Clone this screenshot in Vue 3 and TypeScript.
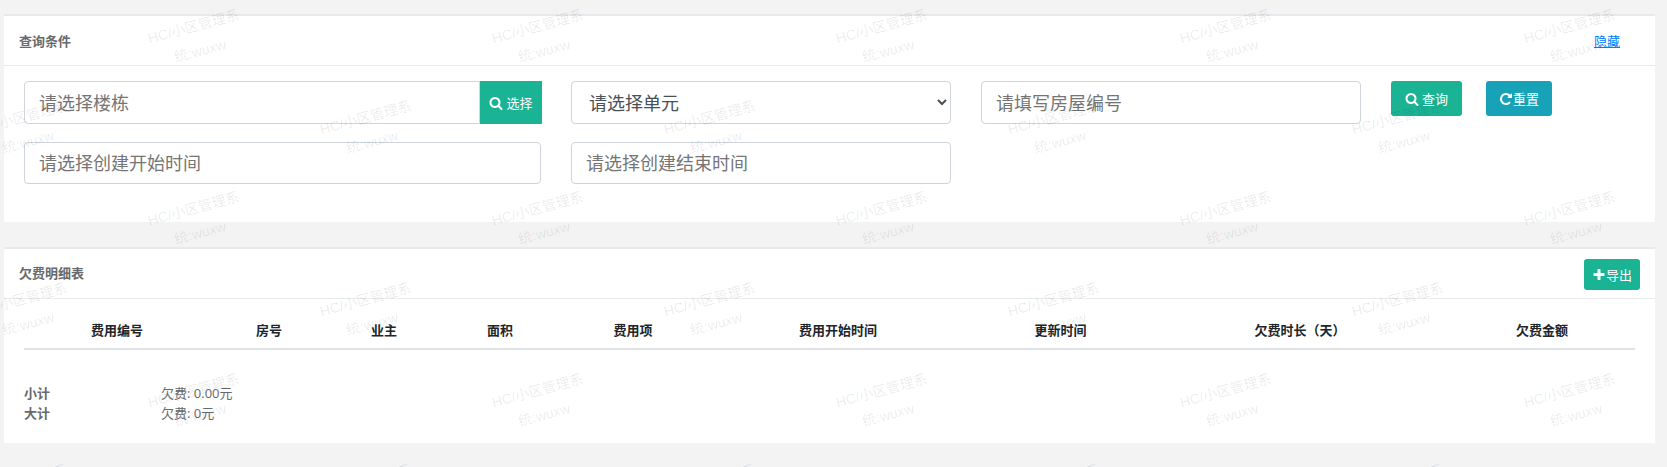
<script setup lang="ts">
const columns = [
  { label: '费用编号', width: 186 },
  { label: '房号', width: 118 },
  { label: '业主', width: 112 },
  { label: '面积', width: 120 },
  { label: '费用项', width: 146 },
  { label: '费用开始时间', width: 264 },
  { label: '更新时间', width: 181 },
  { label: '欠费时长（天）', width: 298 },
  { label: '欠费金额', width: 186 },
]

const marks: { left: number; top: number }[] = []
for (let row = 0; row < 6; row++) {
  const offset = row % 2 === 1 ? 172 : 0
  for (let col = -1; col < 6; col++) {
    marks.push({ left: 197 + offset + col * 344, top: 39 + row * 91 })
  }
}
</script>

<template>
  <div class="page">
    <section class="card search-card">
      <header class="card-head">
        <h5>查询条件</h5>
        <a class="toggle" href="#">隐藏</a>
      </header>
      <div class="search-grid">
        <div class="input-group">
          <input class="field" placeholder="请选择楼栋" />
          <button class="btn select-btn">
            <svg class="icon" viewBox="0 0 1792 1792"><path d="M1216 832q0-185-131.5-316.5t-316.5-131.5-316.5 131.5-131.5 316.5 131.5 316.5 316.5 131.5 316.5-131.5 131.5-316.5zm512 832q0 52-38 90t-90 38q-54 0-90-38l-343-342q-179 124-399 124-143 0-273.5-55.5t-225-150-150-225-55.5-273.5 55.5-273.5 150-225 225-150 273.5-55.5 273.5 55.5 225 150 150 225 55.5 273.5q0 220-124 399l343 343q37 37 37 90z" /></svg>
            <span>选择</span>
          </button>
        </div>
        <select class="field select">
          <option>请选择单元</option>
        </select>
        <input class="field" placeholder="请填写房屋编号" />
        <div class="actions">
          <button class="btn query-btn">
            <svg class="icon" viewBox="0 0 1792 1792"><path d="M1216 832q0-185-131.5-316.5t-316.5-131.5-316.5 131.5-131.5 316.5 131.5 316.5 316.5 131.5 316.5-131.5 131.5-316.5zm512 832q0 52-38 90t-90 38q-54 0-90-38l-343-342q-179 124-399 124-143 0-273.5-55.5t-225-150-150-225-55.5-273.5 55.5-273.5 150-225 225-150 273.5-55.5 273.5 55.5 225 150 150 225 55.5 273.5q0 220-124 399l343 343q37 37 37 90z" /></svg>
            <span>查询</span>
          </button>
          <button class="btn reset-btn">
            <svg class="icon" viewBox="0 0 1792 1792"><path d="M1664 256v448q0 26-19 45t-45 19h-448q-42 0-59-40-17-39 14-69l138-138q-148-137-349-137-104 0-198.5 40.5t-163.5 109.5-109.5 163.5-40.5 198.5 40.5 198.5 109.5 163.5 163.5 109.5 198.5 40.5q119 0 225-52t179-147q7-10 23-12 15 0 25 9l137 138q9 8 9.5 20.5t-7.5 22.5q-109 132-264 204.5t-327 72.5q-156 0-298-61t-245-164-164-245-61-298 61-298 164-245 245-164 298-61q147 0 284.5 55.5t244.5 156.5l130-129q29-31 70-14 39 17 39 59z" /></svg>
            <span>重置</span>
          </button>
        </div>
        <input class="field short" placeholder="请选择创建开始时间" />
        <input class="field short" placeholder="请选择创建结束时间" />
      </div>
    </section>

    <section class="card table-card">
      <header class="card-head">
        <h5>欠费明细表</h5>
        <button class="btn export-btn">
          <svg class="icon" viewBox="0 0 1792 1792"><path d="M1600 736v192q0 40-28 68t-68 28h-416v416q0 40-28 68t-68 28h-192q-40 0-68-28t-28-68v-416h-416q-40 0-68-28t-28-68v-192q0-40 28-68t68-28h416v-416q0-40 28-68t68-28h192q40 0 68 28t28 68v416h416q40 0 68 28t28 68z" /></svg>
          <span>导出</span>
        </button>
      </header>
      <div class="table-wrap">
        <table>
          <thead>
            <tr>
              <th v-for="c in columns" :key="c.label" :style="{ width: c.width + 'px' }">{{ c.label }}</th>
            </tr>
          </thead>
        </table>
        <div class="totals">
          <b>小计</b><span>欠费: 0.00元</span>
          <b>大计</b><span>欠费: 0元</span>
        </div>
      </div>
    </section>

    <div class="watermarks">
      <div
        v-for="(m, i) in marks"
        :key="i"
        class="mark"
        :style="{ left: m.left + 'px', top: m.top + 'px' }"
      >
        <span>HC/小区管理系</span>
        <span>统:wuxw</span>
      </div>
    </div>
  </div>
</template>

<style scoped>
.page {
  position: relative;
  height: 467px;
  overflow: hidden;
  padding: 14px 12px 0 4px;
  box-sizing: border-box;
  background: #f3f3f4;
  font-family: "Open Sans", "Noto Sans CJK SC", sans-serif;
  font-size: 13px;
  color: #676a6c;
}
.card {
  box-sizing: border-box;
  background: #fff;
  border-top: 2px solid #e7eaec;
}
.search-card {
  height: 208px;
}
.table-card {
  margin-top: 25px;
  height: 196px;
}
.card-head {
  box-sizing: border-box;
  height: 50px;
  border-bottom: 1px solid #e7eaec;
  padding: 0 15px;
  display: flex;
  align-items: center;
  justify-content: space-between;
}
.table-card h5 {
  margin-bottom: 2px;
}
h5 {
  margin: 0;
  font-size: 13px;
  font-weight: 700;
  color: #676a6c;
}
.toggle {
  margin-right: 20px;
  color: #007bff;
  text-decoration: underline;
}
.search-grid {
  display: grid;
  grid-template-columns: 517px 380px 380px 1fr;
  column-gap: 30px;
  row-gap: 18px;
  padding: 15px 20px 0;
  align-items: start;
}
.input-group {
  display: flex;
}
.field {
  box-sizing: border-box;
  width: 100%;
  height: 43px;
  padding: 0 14px;
  border: 1px solid #ced4da;
  border-radius: 4px;
  background: #fff;
  font-family: inherit;
  font-size: 18px;
  color: #495057;
  outline: none;
}
.field::placeholder {
  color: #757575;
  opacity: 1;
}
.field.short {
  height: 42px;
}
.input-group .field {
  flex: 1;
  border-radius: 4px 0 0 4px;
}
.select {
  padding: 0 0 0 13px;
}
.btn {
  border: 0;
  border-radius: 3px;
  color: #fff;
  font-family: inherit;
  font-size: 13px;
  display: inline-flex;
  align-items: center;
  justify-content: center;
  padding: 0;
  background: #1ab394;
}
.icon {
  width: 14px;
  height: 14px;
  fill: #fff;
  flex: none;
}
.select-btn {
  width: 62px;
  height: 43px;
  flex: none;
  border-radius: 0;
  gap: 3px;
  margin-right: -1px;
}
.actions {
  display: flex;
  gap: 24px;
}
.query-btn {
  width: 71px;
  height: 35px;
  gap: 3px;
}
.reset-btn {
  width: 66px;
  height: 35px;
  background: #17a2b8;
}
.export-btn {
  width: 56px;
  height: 31px;
  margin-top: 2px;
}
.table-wrap {
  padding: 0 20px;
}
table {
  border-collapse: collapse;
  table-layout: fixed;
  width: 1611px;
}
th {
  box-sizing: border-box;
  height: 50px;
  padding: 12px 0 0;
  font-size: 13px;
  font-weight: 700;
  text-align: center;
  color: #212529;
  border-bottom: 2px solid #dee2e6;
}
.totals {
  display: grid;
  grid-template-columns: 137px 1fr;
  line-height: 20px;
  margin-top: 33px;
}
.totals b {
  font-weight: 700;
}
.watermarks {
  position: absolute;
  inset: 0;
  pointer-events: none;
}
.mark {
  position: absolute;
  width: 200px;
  margin: -25px 0 0 -100px;
  display: flex;
  flex-direction: column;
  align-items: center;
  line-height: 25px;
  font-family: "Liberation Sans", "Noto Sans CJK SC", sans-serif;
  font-size: 14px;
  color: rgba(0, 0, 0, 0.09);
  transform: rotate(-15deg);
  white-space: nowrap;
}
</style>

<style>
html,
body {
  margin: 0;
  background: #f3f3f4;
}
</style>
